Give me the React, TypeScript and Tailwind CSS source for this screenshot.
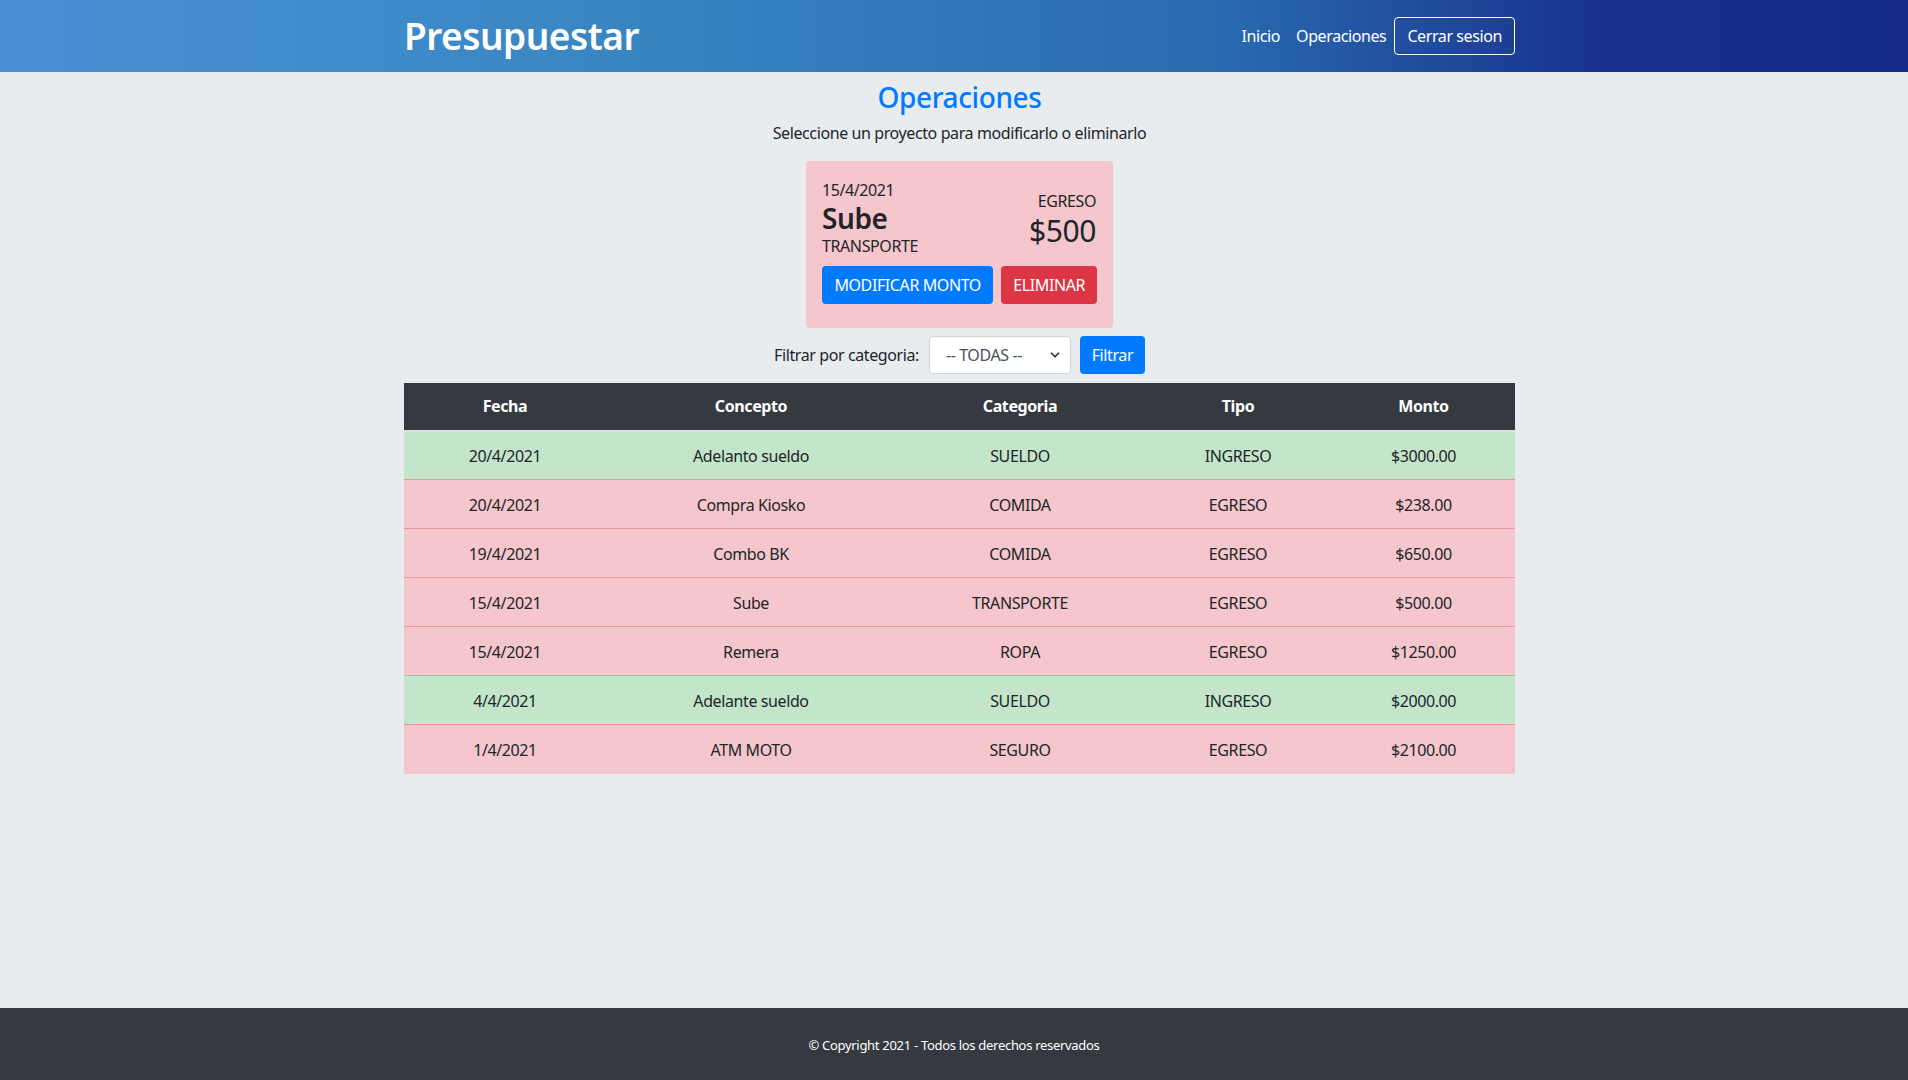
import { ChevronDown } from "lucide-react"

type Row = {
  fecha: string
  concepto: string
  categoria: string
  tipo: "INGRESO" | "EGRESO"
  monto: string
}

const rows: Row[] = [
  { fecha: "20/4/2021", concepto: "Adelanto sueldo", categoria: "SUELDO", tipo: "INGRESO", monto: "$3000.00" },
  { fecha: "20/4/2021", concepto: "Compra Kiosko", categoria: "COMIDA", tipo: "EGRESO", monto: "$238.00" },
  { fecha: "19/4/2021", concepto: "Combo BK", categoria: "COMIDA", tipo: "EGRESO", monto: "$650.00" },
  { fecha: "15/4/2021", concepto: "Sube", categoria: "TRANSPORTE", tipo: "EGRESO", monto: "$500.00" },
  { fecha: "15/4/2021", concepto: "Remera", categoria: "ROPA", tipo: "EGRESO", monto: "$1250.00" },
  { fecha: "4/4/2021", concepto: "Adelante sueldo", categoria: "SUELDO", tipo: "INGRESO", monto: "$2000.00" },
  { fecha: "1/4/2021", concepto: "ATM MOTO", categoria: "SEGURO", tipo: "EGRESO", monto: "$2100.00" },
]

const App = () => {
  return (
    <div className="min-h-screen flex flex-col bg-[#e9ecef] text-[#212529] text-base tracking-[-0.4px] font-['Segoe_UI','Noto_Sans',sans-serif]">
      {/* NAVBAR */}
      <header className="h-[72px] shrink-0 bg-[linear-gradient(to_right,#4a8fd6_0%,#3a87c3_30%,#2a6ab1_64%,#18328c_84%,#142c86_100%)]">
        <div className="pl-[11px] h-full">
          <div className="mx-auto w-[1111px] h-full flex items-center justify-between">
            <span className="text-[37px] leading-none font-semibold tracking-[-0.5px] text-white -mt-[1px]">Presupuestar</span>
            <nav className="flex items-center text-white">
              <a className="px-2 leading-6">Inicio</a>
              <a className="px-2 leading-6">Operaciones</a>
              <button className="h-[38px] px-3 border border-white rounded text-white">Cerrar sesion</button>
            </nav>
          </div>
        </div>
      </header>

      <main className="flex-1 pl-[11px]">
        <div className="mx-auto w-[1111px] flex flex-col items-center">
          <h3 className="mt-[9px] text-[28px] leading-[1.2] font-medium text-[#007bff]">Operaciones</h3>
          <p className="mt-[6px] leading-6">Seleccione un proyecto para modificarlo o eliminarlo</p>

          {/* SELECTED OPERATION CARD */}
          <div className="mt-[16px] w-[307px] rounded bg-[#f5c6cb] px-4 pt-[17px] pb-6">
            <div className="flex items-center justify-between">
              <div className="flex flex-col">
                <span className="leading-6">15/4/2021</span>
                <span className="text-[28px] leading-8 font-semibold">Sube</span>
                <span className="leading-6">TRANSPORTE</span>
              </div>
              <div className="flex flex-col items-end pt-[2px] pr-[1px]">
                <span className="leading-6">EGRESO</span>
                <span className="text-[30px] leading-9 font-normal">$500</span>
              </div>
            </div>
            <div className="mt-2 flex gap-2">
              <button className="h-[38px] w-[172px] rounded bg-[#007bff] text-white">MODIFICAR MONTO</button>
              <button className="h-[38px] w-[96px] rounded bg-[#dc3545] text-white">ELIMINAR</button>
            </div>
          </div>

          {/* FILTER */}
          <div className="mt-[8px] flex items-center">
            <label className="leading-6">Filtrar por categoria:</label>
            <div className="ml-[10px] h-[38px] w-[142px] flex items-center justify-between rounded border border-[#ced4da] bg-white pl-4 pr-2 text-[#495057]">
              <span>-- TODAS --</span>
              <ChevronDown size={14} strokeWidth={3} className="text-[#333]" />
            </div>
            <button className="ml-[9px] h-[38px] w-[65px] rounded bg-[#007bff] text-white">Filtrar</button>
          </div>

          {/* TABLE */}
          <table className="mt-[9px] w-full table-fixed border-collapse text-center">
            <thead>
              <tr className="bg-[#343a40] text-white">
                <th className="w-[202px] h-[48px] font-bold border-b-2 border-[#dcdfe3]">Fecha</th>
                <th className="w-[290px] font-bold border-b-2 border-[#dcdfe3]">Concepto</th>
                <th className="w-[248px] font-bold border-b-2 border-[#dcdfe3]">Categoria</th>
                <th className="w-[188px] font-bold border-b-2 border-[#dcdfe3]">Tipo</th>
                <th className="font-bold border-b-2 border-[#dcdfe3]">Monto</th>
              </tr>
            </thead>
            <tbody>
              {rows.map((row, index) => (
                <tr
                  key={index}
                  className={
                    row.tipo === "INGRESO"
                      ? "bg-[#c3e6cb] border-t border-[#8fd19e]"
                      : "bg-[#f5c6cb] border-t border-[#ed969e]"
                  }
                >
                  <td className="h-[49px] pt-[1px]">{row.fecha}</td>
                  <td className="pt-[1px]">{row.concepto}</td>
                  <td className="pt-[1px]">{row.categoria}</td>
                  <td className="pt-[1px]">{row.tipo}</td>
                  <td className="pt-[1px]">{row.monto}</td>
                </tr>
              ))}
            </tbody>
          </table>
        </div>
      </main>

      <footer className="h-[72px] shrink-0 bg-[#343a40] flex items-center justify-center pt-[3px] text-white text-[13px] tracking-[-0.3px]">
        © Copyright 2021 - Todos los derechos reservados
      </footer>
    </div>
  )
}

export default App
